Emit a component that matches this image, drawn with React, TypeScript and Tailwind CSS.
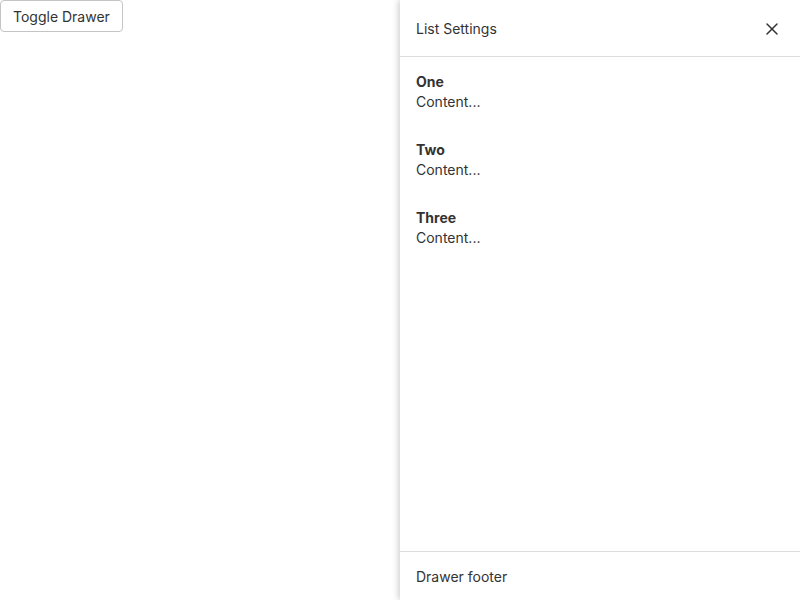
import { X } from 'lucide-react'

const items = ['One', 'Two', 'Three']

export default function App() {
  return (
    <div className="relative h-[600px] w-[800px] overflow-hidden bg-white text-[14px] leading-5 text-[#333]" style={{ fontFamily: 'Inter, "Noto Sans", sans-serif' }}>
      <button className="h-8 rounded-[4px] border border-[#c4c4c4] bg-white px-3 pt-[1px] text-[14px] text-[#333]">
        Toggle Drawer
      </button>

      {/* Drawer */}
      <aside className="absolute right-0 top-0 flex h-full w-[400px] flex-col bg-white shadow-[-2px_0_6px_rgba(0,0,0,0.18)]">
        <div className="flex h-[57px] shrink-0 items-center justify-between border-b border-[#dcdcdc] pl-4 pr-[18px] pt-[2px]">
          <span>List Settings</span>
          <X size={20} strokeWidth={1.75} className="text-[#333]" />
        </div>

        <div className="flex flex-1 flex-col gap-7 px-4 pt-[15px]">
          {items.map((t) => (
            <div key={t}>
              <div className="font-bold">{t}</div>
              <div>Content...</div>
            </div>
          ))}
        </div>

        <div className="h-[49px] shrink-0 border-t border-[#dcdcdc] px-4 pt-[15px]">Drawer footer</div>
      </aside>
    </div>
  )
}
